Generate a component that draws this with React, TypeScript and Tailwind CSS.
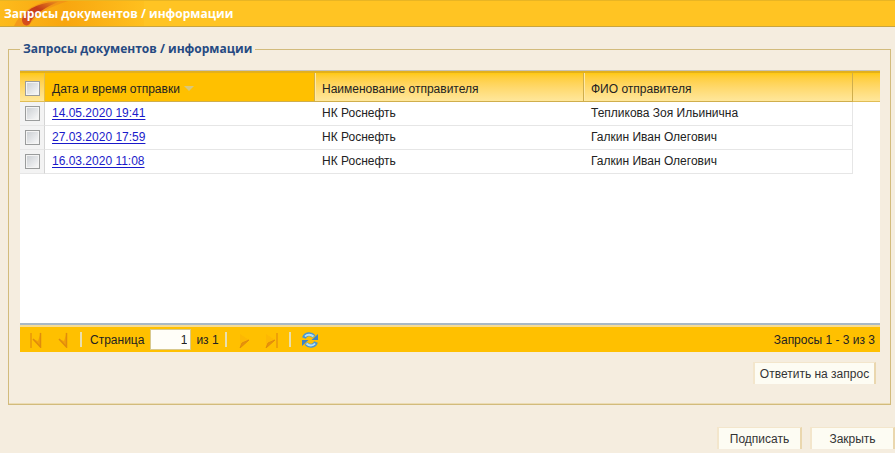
import React, { useState } from "react";

const TITLE = "Запросы документов / информации";

type Request = { id: number; sentAt: string; org: string; person: string };

const REQUESTS: Request[] = [
  { id: 1, sentAt: "14.05.2020 19:41", org: "НК Роснефть", person: "Тепликова Зоя Ильинична" },
  { id: 2, sentAt: "27.03.2020 17:59", org: "НК Роснефть", person: "Галкин Иван Олегович" },
  { id: 3, sentAt: "16.03.2020 11:08", org: "НК Роснефть", person: "Галкин Иван Олегович" },
];

function Flourish() {
  return (
    <svg className="absolute left-0 top-0 h-full w-36" viewBox="0 0 144 27" preserveAspectRatio="none" aria-hidden="true">
      <defs>
        <linearGradient id="ribbon" x1="0" y1="1" x2="1" y2="0">
          <stop offset="0" stopColor="#d9501c" />
          <stop offset="0.55" stopColor="#c43c1a" />
          <stop offset="1" stopColor="#ee9a1a" />
        </linearGradient>
        <linearGradient id="glow" x1="0" x2="1">
          <stop offset="0" stopColor="#fdbb1c" />
          <stop offset="0.45" stopColor="#f8a60f" />
          <stop offset="1" stopColor="#ffc01e" />
        </linearGradient>
      </defs>
      <rect width="144" height="27" fill="url(#glow)" />
      <path d="M14 27 C20 13 32 4 48 0 H68 C48 7 36 14 29 27Z" fill="#f08c18" opacity="0.65" />
      <path d="M22 20 C25 9 38 2 60 0 C47 6 34 14 30 24 C28 28 22 27 22 20Z" fill="url(#ribbon)" />
    </svg>
  );
}

function RowCheckbox({ label }: { label: string }) {
  return (
    <input
      type="checkbox"
      aria-label={label}
      className="block size-[15px] appearance-none border border-[#9a9c9c] bg-linear-to-br from-[#c9cdd2] to-[#fbfbfb] shadow-[inset_0_0_0_1px_#f4f4f4] checked:from-[#5b7ea8] checked:to-[#9bb8d8]"
    />
  );
}

function ActionButton({ children, className }: { children: React.ReactNode; className: string }) {
  return (
    <button
      type="button"
      className={`h-[22px] border-x-2 border-t border-l-[#f3e6cc] border-t-[#f3e6cc] border-r-[#ead7ae] bg-[#fdfcf3] text-center whitespace-nowrap text-[#333] ${className}`}
    >
      {children}
    </button>
  );
}

function PagerButton({ label, bar, back }: { label: string; bar?: boolean; back?: boolean }) {
  return (
    <button type="button" aria-label={label} className="flex size-4 items-center justify-center">
      <svg viewBox="0 0 16 16" className="size-4" aria-hidden="true">
        {back ? (
          <>
            {bar && <path d="M3 1V16" stroke="#e8970a" strokeWidth="1.500" />}
            <path d="M13 0V16L5 7L10 9Z" fill="#f2a008" />
            <path d="M5 7L12.500 15V1" fill="none" stroke="#e08c0c" strokeWidth="1.500" />
          </>
        ) : (
          <>
            {bar && <path d="M14 1V16" stroke="#e8970a" strokeWidth="1.500" />}
            <path d="M3 2L12 8L3 16Z" fill="#fdb803" />
            <path d="M3 16L12 8L5 11Z" fill="#e8920c" stroke="#e08c0c" />
          </>
        )}
      </svg>
    </button>
  );
}

function Separator() {
  return <span className="h-[15px] w-[2px] bg-[#e9dfae]" />;
}

function RefreshIcon() {
  return (
    <svg viewBox="0 0 18 18" className="block size-[18px]" aria-hidden="true">
      <g fill="none" stroke="#4a96cf" strokeWidth="4">
        <path d="M3 7C4.500 2.500 10 2 13 5.500" />
        <path d="M15 11C13.500 15.500 8 16 5 12.500" />
      </g>
      <path d="M17 3V9H10.500Z" fill="#3f83c4" />
      <path d="M1 15V9H7.500Z" fill="#3f83c4" />
      <g fill="none" stroke="#b5e0f5" strokeWidth="2">
        <path d="M4 5.500C6 3 10 3 12.500 5.500" />
        <path d="M14 12.500C12 15 8 15 5.500 12.500" />
      </g>
    </svg>
  );
}

const headCell =
  "h-[29px] border-r border-b border-[#cfae4c] bg-linear-to-b from-[#ffc90f] to-[#ffe79b] pl-[7px] pt-[3px] text-left font-normal shadow-[inset_1px_0_0_#ffe9a6]";
const bodyCell = "border-b border-[#e6e6e6] pl-[7px] pb-[2px]";

export default function App() {
  const [page, setPage] = useState("1");

  return (
    <div className="min-h-screen bg-[#f5eddf] font-['Liberation_Sans',Arial,sans-serif] text-[12px] leading-4 text-[#222]">
      <header className="relative h-[27px] border-t border-b border-t-[#e8b524] border-b-[#c9a53f] bg-[#ffc423]">
        <Flourish />
        <h1 className="relative pt-[5px] pl-1 font-['Open_Sans','Noto_Sans',sans-serif] text-[12px] leading-4 font-bold text-white">
          {TITLE}
        </h1>
      </header>

      <main className="pt-[14px]">
        <fieldset className="mr-1 ml-2 min-w-0 border border-[#d2bb7c] pr-[10px] pb-[20px] pl-[11px] shadow-[inset_0_-1px_0_#ecdcb4]">
          <legend className="px-[3px] font-['Open_Sans','Noto_Sans',sans-serif] text-[12px] leading-4 font-bold text-[#264a82]">
            {TITLE}
          </legend>

          <section className="mt-[13px] border-t border-[#c9c2b4] bg-white">
            <div className="min-h-[252px] border-t-2 border-[#e3b01c]">
              <table className="w-full table-fixed border-separate border-spacing-0">
                <colgroup>
                  <col className="w-[25px]" />
                  <col className="w-[270px]" />
                  <col className="w-[269px]" />
                  <col className="w-[269px]" />
                  <col />
                </colgroup>
                <thead>
                  <tr>
                    <th className="border-r border-b border-[#e0bd55] bg-linear-to-b from-[#ffc90f] to-[#ffe79b] pt-[3px] pl-[5px]">
                      <RowCheckbox label="Выбрать все" />
                    </th>
                    <th className="border-r border-b border-[#cfae4c] bg-[#ffc000] pt-[3px] pl-[7px] text-left font-normal">
                      <span className="flex items-center gap-1">
                        Дата и время отправки
                        <svg viewBox="0 0 10 5" className="h-[5px] w-[10px]" aria-hidden="true">
                          <path d="M0 0H10L5 5Z" fill="#d8c77c" />
                        </svg>
                      </span>
                    </th>
                    <th className={headCell}>Наименование отправителя</th>
                    <th className={headCell}>ФИО отправителя</th>
                    <th className="border-b border-[#e0bd55] bg-linear-to-b from-[#ffc90f] to-[#ffe79b]" />
                  </tr>
                </thead>
                <tbody>
                  {REQUESTS.map((r) => (
                    <tr key={r.id} className="h-[24px]">
                      <td className="border-r border-b border-r-[#d4d4d4] border-b-[#e6e6e6] bg-[#f3f3f3] pl-[5px]">
                        <RowCheckbox label={`Выбрать запрос ${r.sentAt}`} />
                      </td>
                      <td className={bodyCell}>
                        <a href={`#request-${r.id}`} className="text-[#1a1aca] underline underline-offset-2">
                          {r.sentAt}
                        </a>
                      </td>
                      <td className={bodyCell}>{r.org}</td>
                      <td className={`${bodyCell} border-r`}>{r.person}</td>
                      <td />
                    </tr>
                  ))}
                </tbody>
              </table>
            </div>

            <div className="border-t-2 border-[#a9b9c6]">
              <div className="flex h-[27px] items-center border-t-2 border-[#f6dc94] bg-[#ffc000] pr-[5px] pl-2">
                <div className="flex items-center gap-[10px]">
                  <PagerButton label="Первая страница" bar back />
                  <PagerButton label="Предыдущая страница" back />
                  <Separator />
                </div>
                <label className="flex items-center gap-[6px] pl-2">
                  Страница
                  <input
                    type="text"
                    value={page}
                    onChange={(e) => setPage(e.target.value)}
                    className="h-[21px] w-[41px] border border-[#d9c98c] bg-[#fffef8] px-[3px] text-right"
                  />
                </label>
                <span className="pr-[6px] pl-[5px]">из 1</span>
                <div className="flex items-center gap-[10px]">
                  <Separator />
                  <PagerButton label="Следующая страница" />
                  <PagerButton label="Последняя страница" bar />
                  <Separator />
                  <button type="button" aria-label="Обновить">
                    <RefreshIcon />
                  </button>
                </div>
                <span className="ml-auto">Запросы 1 - 3 из 3</span>
              </div>
            </div>
          </section>

          <div className="flex justify-end pt-[10px] pr-1">
            <ActionButton className="w-[123px]">Ответить на запрос</ActionButton>
          </div>
        </fieldset>

        <div className="flex justify-end gap-2 pt-[22px]">
          <ActionButton className="w-[85px]">Подписать</ActionButton>
          <ActionButton className="w-[85px]">Закрыть</ActionButton>
        </div>
      </main>
    </div>
  );
}
